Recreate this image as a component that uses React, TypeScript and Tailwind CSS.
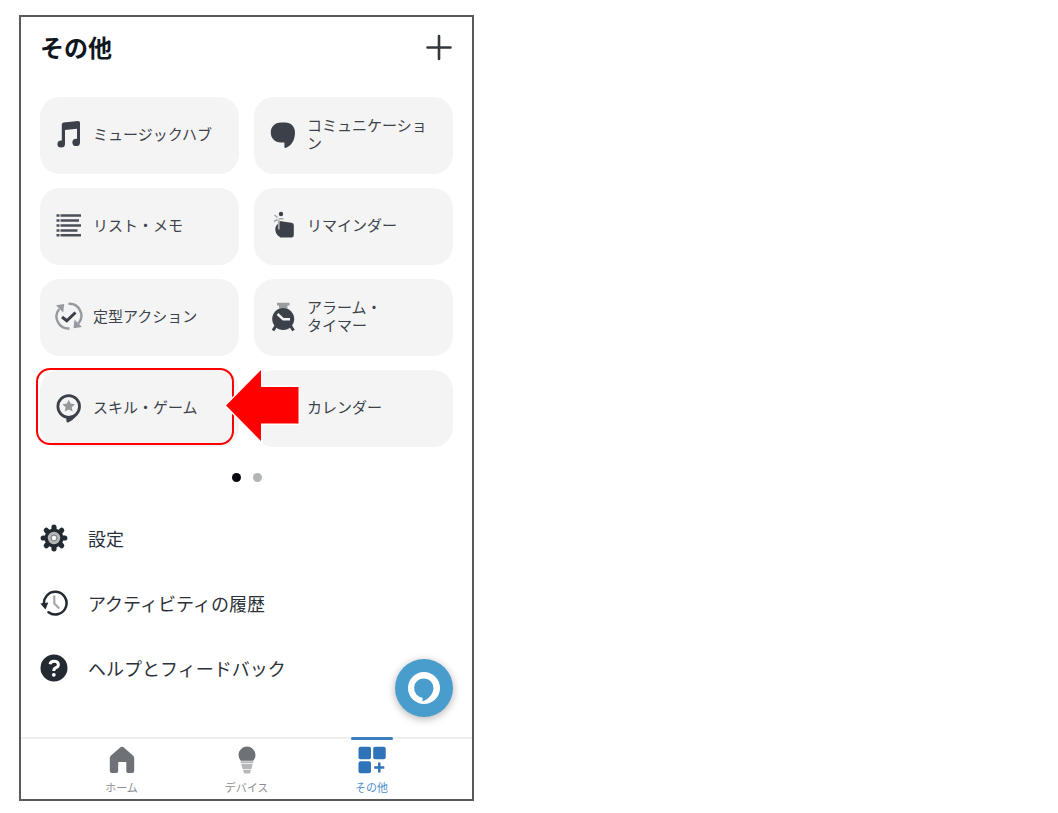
import type { ReactNode } from "react";

const MusicIcon = () => (
  <svg viewBox="0 0 28 28" className="size-7 overflow-visible" fill="#3c4149">
    <path d="M6.800 4.500Q6.800 2.900 8.600 2.600L23 1Q25 .9 25 2.800V22.500H22V8.800L10 10V24H6.800Z" />
    <ellipse cx="6.200" cy="24" rx="3.800" ry="3.600" />
    <ellipse cx="21.200" cy="22.400" rx="3.800" ry="3.600" />
  </svg>
);

const ChatIcon = () => (
  <svg viewBox="0 0 28 28" className="size-7" fill="#3c4149">
    <path d="M12 2.500H16C22 2.500 26 6.500 26 12.500C26 20 22.500 26 16.500 28Q15.300 28 15.400 26.500V22.500H12C5.500 22.500 1.800 18 1.800 12.500S5.500 2.500 12 2.500Z" />
  </svg>
);

const ListIcon = () => (
  <svg viewBox="0 0 28 28" className="size-7" fill="none" stroke="#4b4f57" strokeWidth="2.600">
    <path d="M1.500 4.500H4.500M5.500 4.500H26M1.500 9.500H4.500M5.500 9.500H24M1.500 14.500H4.500M5.500 14.500H26M1.500 19.500H4.500M5.500 19.500H22.500M1.500 24.200H4.500M5.500 24.200H26" />
  </svg>
);

const ReminderIcon = () => (
  <svg viewBox="0 0 28 28" className="size-7">
    <circle cx="12" cy="3" r="2.200" fill="#3c4149" />
    <path d="M5.500 4L8.500 6.500M5 10.500L8.500 8.500M9.500 7.800H14.500" stroke="#a6a8ab" strokeWidth="1.600" fill="none" />
    <path d="M10.500 10.800Q12 9.300 13.500 10.500L22.500 11.800Q24.800 12.200 24.800 14V24Q24.800 26.500 22.500 26.500H11.500C8.500 25 6.300 22 6.300 18.500Q6.300 14.500 9.300 12.800Z" fill="#3c4149" />
    <path d="M9.800 9V18.500" stroke="#a6a8ab" strokeWidth="1.800" />
  </svg>
);

const RoutineIcon = () => (
  <svg viewBox="0 0 28 28" className="size-7" fill="none">
    <path d="M13.500 1.800A12 12 0 0 1 23.500 21.500M14.500 26.500A12 12 0 0 1 4.200 7" stroke="#969a9e" strokeWidth="2.400" />
    <path d="M1 3.200L9.200 2L8.200 10.500ZM27 25L18.500 26.200L19.500 17.500Z" fill="#969a9e" />
    <path d="M7 15L11.800 18.800L20.500 10.500" stroke="#3c4149" strokeWidth="3" />
  </svg>
);

const AlarmIcon = () => (
  <svg viewBox="0 0 28 28" className="size-7 overflow-visible">
    <path d="M8 2.200H20.500M10 5H18.500" stroke="#999b9e" strokeWidth="2.800" />
    <circle cx="14.200" cy="17" r="11" fill="#3c4149" />
    <path d="M4 28.500L7.500 23M24.500 28.500L21 23" stroke="#3c4149" strokeWidth="3" />
    <path d="M8.500 12L14.200 17.200H21" stroke="#f4f4f4" strokeWidth="2.400" fill="none" />
  </svg>
);

const SkillIcon = () => (
  <svg viewBox="0 0 28 28" className="size-7 overflow-visible">
    <circle cx="13.700" cy="13.500" r="10.800" fill="none" stroke="#3c4149" strokeWidth="2.800" />
    <path d="M11 24L18.500 23L22.500 21.500Q18 27.500 13 29.500Q11.500 29.800 11.500 28Z" fill="#3c4149" />
    <path d="M13.700 6.800L15.600 10.600L20 11.200L16.800 14.200L17.600 18.500L13.700 16.500L9.800 18.500L10.600 14.200L7.400 11.200L11.800 10.600Z" fill="#96989b" />
  </svg>
);

const GearIcon = () => (
  <svg viewBox="0 0 28 28" className="size-7">
    <g stroke="#232a32" strokeWidth="5.200" strokeLinecap="round">
      <path d="M14 3.200V24.800M3.200 14H24.800M6.300 6.300L21.700 21.700M21.700 6.300L6.300 21.700" />
    </g>
    <circle cx="14" cy="14" r="9.500" fill="#232a32" />
    <circle cx="14" cy="14" r="4.800" fill="#85888b" stroke="#b5b7b9" strokeWidth="2.800" />
    <circle cx="14" cy="14" r="2.200" fill="#fff" />
  </svg>
);

const HistoryIcon = () => (
  <svg viewBox="0 0 28 28" className="size-7" fill="none">
    <path d="M4.200 16.500A11.300 11.300 0 1 1 8.500 23.200" stroke="#232a32" strokeWidth="2.500" strokeLinecap="round" />
    <path d="M.3 14.500L8.300 13.500L5.500 20.500Z" fill="#232a32" />
    <path d="M14.300 6.500V14.500L19.300 19.500" stroke="#a6a9ab" strokeWidth="2.200" />
  </svg>
);

const HelpIcon = () => (
  <svg viewBox="0 0 28 28" className="size-7" fill="none">
    <circle cx="14" cy="14" r="13.500" fill="#232a32" />
    <path d="M10 10.300Q10.500 7.300 14 7.300C19.500 7.300 19.300 12.500 16 13.700Q13.800 14.600 13.800 17" stroke="#fff" strokeWidth="3" />
    <circle cx="13.800" cy="20.800" r="1.900" fill="#fff" />
  </svg>
);

const HomeIcon = () => (
  <svg viewBox="0 0 28 28" className="size-7" fill="#6e7276">
    <path d="M12.500 1.300Q14 .3 15.500 1.300L25 9.500Q26.200 10.500 26.200 12V25Q26.200 27 24.200 27H20Q18.300 27 18.300 25V16H10.200V25Q10.200 27 8.200 27H3.800Q1.800 27 1.800 25V12Q1.800 10.500 3 9.500Z" />
  </svg>
);

const BulbIcon = () => (
  <svg viewBox="0 0 28 28" className="size-7">
    <path d="M7.700 14.700A8.500 8.500 0 1 1 20.300 14.700Z" fill="#6e7276" />
    <path d="M7.500 15.300H20.500L20 17.300H8ZM8.300 18H19.700L18.500 23H9.500ZM10 23.800H18L17 27.500H11Z" fill="#b5b7b9" />
  </svg>
);

const MoreIcon = () => (
  <svg viewBox="0 0 28 28" className="size-7" fill="#2f73b8">
    <rect x=".5" y=".8" width="12.500" height="12.500" rx="2" />
    <rect x="15.200" y=".8" width="12.500" height="12.500" rx="2" />
    <rect x=".5" y="15.300" width="12.500" height="12" rx="2" />
    <path d="M20 16.500H22.500V20.300H26.300V22.800H22.500V26.600H20V22.800H16.200V20.300H20Z" />
  </svg>
);

const ArrowMarker = () => (
  <svg viewBox="0 0 76 76" className="absolute -left-[30px] -top-[2px] z-10 h-[76px] w-[76px]">
    <path d="M2 37.500L37 2V19H74.500V55.500H37V73Z" fill="#ff0000" stroke="#fff" strokeWidth="3" paintOrder="stroke" />
  </svg>
);

interface Tile {
  label: string;
  icon?: ReactNode;
  highlighted?: boolean;
  marker?: boolean;
}

const tiles: Tile[] = [
  { label: "ミュージックハブ", icon: <MusicIcon /> },
  { label: "コミュニケーション", icon: <ChatIcon /> },
  { label: "リスト・メモ", icon: <ListIcon /> },
  { label: "リマインダー", icon: <ReminderIcon /> },
  { label: "定型アクション", icon: <RoutineIcon /> },
  { label: "アラーム・\nタイマー", icon: <AlarmIcon /> },
  { label: "スキル・ゲーム", icon: <SkillIcon />, highlighted: true },
  { label: "カレンダー", marker: true },
];

const links = [
  { label: "設定", icon: <GearIcon /> },
  { label: "アクティビティの履歴", icon: <HistoryIcon /> },
  { label: "ヘルプとフィードバック", icon: <HelpIcon /> },
];

const tabs = [
  { label: "ホーム", icon: <HomeIcon />, active: false },
  { label: "デバイス", icon: <BulbIcon />, active: false },
  { label: "その他", icon: <MoreIcon />, active: true },
];

export default function App() {
  return (
    <div className="min-h-screen bg-white pb-3 pl-[19px] pr-4 pt-[15px] font-['Noto_Sans_CJK_JP',sans-serif]">
      <main className="relative w-full max-w-[455px] border-2 border-[#5a5a5a] bg-white">
        <div className="px-[19px] pb-[55px] pt-3.5">
          <header className="flex h-8 items-center justify-between">
            <h1 className="text-2xl font-bold leading-8 text-[#10161e]">その他</h1>
            <button type="button" aria-label="追加" className="flex size-7 items-center justify-center">
              <svg viewBox="0 0 28 28" className="size-7" stroke="#33383f" strokeWidth="2.600" strokeLinecap="round">
                <path d="M14 3V26M2.500 14.500H25.500" />
              </svg>
            </button>
          </header>

          <div className="mt-[34px] grid grid-cols-2 gap-x-[15px] gap-y-3.5">
            {tiles.map((tile) => (
              <div key={tile.label} className="relative">
                <button
                  type="button"
                  className="flex h-[77px] w-full items-center gap-2.5 rounded-[20px] bg-[#f4f4f4] pb-[3px] pl-[15px] pr-5 text-left text-[15px] leading-[18px] text-[#3c424a]"
                >
                  <span className="size-7 shrink-0">{tile.icon}</span>
                  <span className="whitespace-pre-line">{tile.label}</span>
                </button>
                {tile.highlighted && (
                  <span className="pointer-events-none absolute -left-1 -top-0.5 bottom-[2px] right-[5px] rounded-[14px] border-2 border-[#ff0000]" />
                )}
                {tile.marker && <ArrowMarker />}
              </div>
            ))}
          </div>

          <div className="mt-[26px] flex justify-center gap-3">
            <span className="size-[9px] rounded-full bg-[#05090f]" />
            <span className="size-[9px] rounded-full bg-[#b3b4b5]" />
          </div>

          <ul className="mt-[42px] flex flex-col gap-[37px]">
            {links.map((link) => (
              <li key={link.label}>
                <a href="#" className="flex h-7 items-center gap-5 text-lg text-[#2b3138]">
                  {link.icon}
                  <span>{link.label}</span>
                </a>
              </li>
            ))}
          </ul>
        </div>

        <button
          type="button"
          aria-label="Alexa"
          className="absolute bottom-[82px] right-[19px] flex size-[58px] items-center justify-center rounded-full bg-[#489dcd] shadow-[0_2px_8px_rgba(0,0,0,0.3)]"
        >
          <svg viewBox="0 0 32 32" className="size-8">
            <circle cx="16" cy="16" r="16" fill="#fff" />
            <path d="M14.500 29.500V25.700A9.700 9.700 0 1 1 25.500 16C25.500 22 20 27.500 14.500 29.500Z" fill="#489dcd" />
          </svg>
        </button>

        <nav className="flex border-t-2 border-[#eeeeee] px-[38px]">
          {tabs.map((tab) => (
            <a
              key={tab.label}
              href="#"
              className={`relative flex flex-1 flex-col items-center pb-1 pt-[7px] text-[11px] leading-4 ${
                tab.active ? "text-[#4a8fca]" : "text-[#8b8e91]"
              }`}
            >
              {tab.active && <span className="absolute -top-0.5 h-[3px] w-[42px] rounded-full bg-[#3c7fc0]" />}
              {tab.icon}
              <span className="mt-[5px]">{tab.label}</span>
            </a>
          ))}
        </nav>
      </main>
    </div>
  );
}
